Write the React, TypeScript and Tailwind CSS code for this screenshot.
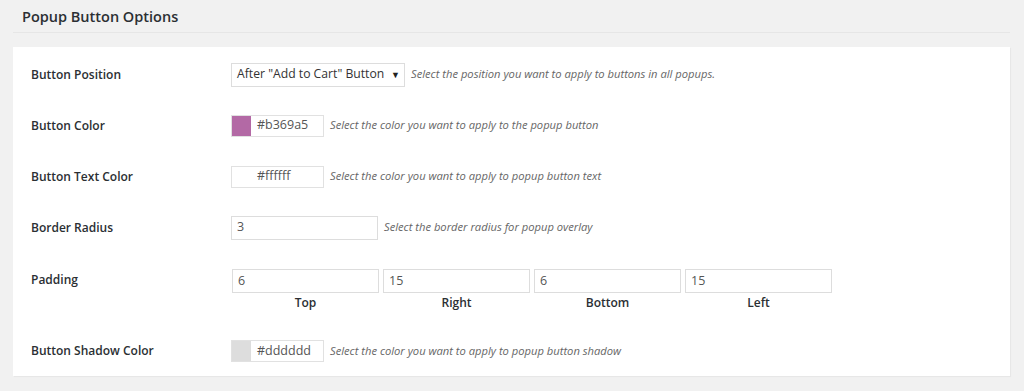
import React from "react";

const font = { fontFamily: "'Open Sans', 'Liberation Sans', sans-serif" };

function Label({ children }: { children: React.ReactNode }) {
  return <div className="w-[200px] shrink-0 text-[12px] font-semibold text-[#2b2f33]">{children}</div>;
}

function Desc({ children }: { children: React.ReactNode }) {
  return <span className="ml-[6px] text-[11.2px] italic text-[#666]">{children}</span>;
}

function ColorField({ color, value }: { color: string; value: string }) {
  return (
    <div className="flex h-[22px] w-[93px] border border-[#e1e1e1] bg-white">
      <div className="h-full w-[19px]" style={{ background: color }} />
      <div className="flex items-center pl-[6px] text-[12.5px] text-[#555]">{value}</div>
    </div>
  );
}

function TextField({ value, w = "w-[147px]" }: { value: string; w?: string }) {
  return (
    <div className={`flex h-[24px] ${w} items-center border border-[#dddddd] bg-white pl-[5px] text-[12.5px] text-[#555]`}>
      {value}
    </div>
  );
}

export default function App() {
  const sides = [
    { v: "6", l: "Top" },
    { v: "15", l: "Right" },
    { v: "6", l: "Bottom" },
    { v: "15", l: "Left" },
  ];

  return (
    <div className="h-[391px] w-[1024px] bg-[#f1f1f1] pl-[13px] pr-[14px]" style={font}>
      {/* Header */}
      <div className="flex h-[33px] items-center border-b border-[#e6e6e6] pl-[9px] pt-[1px] text-[14.5px] font-semibold text-[#2b2f33]">
        Popup Button Options
      </div>

      {/* Panel */}
      <div className="mt-[14px] bg-white pl-[18px] pt-[2px] shadow-[1px_1px_1px_rgba(0,0,0,0.04)]">
        <div className="flex h-[51px] items-center">
          <Label>Button Position</Label>
          <div className="flex h-[24px] w-[174px] items-center justify-between border border-[#dddddd] bg-white pl-[5px] pr-[4px] text-[12.2px] text-[#333]">
            <span>After "Add to Cart" Button</span>
            <span className="text-[9px] text-[#222]">▼</span>
          </div>
          <Desc>Select the position you want to apply to buttons in all popups.</Desc>
        </div>

        <div className="flex h-[51px] items-center">
          <Label>Button Color</Label>
          <ColorField color="#b369a5" value="#b369a5" />
          <Desc>Select the color you want to apply to the popup button</Desc>
        </div>

        <div className="flex h-[51px] items-center">
          <Label>Button Text Color</Label>
          <ColorField color="#ffffff" value="#ffffff" />
          <Desc>Select the color you want to apply to popup button text</Desc>
        </div>

        <div className="flex h-[51px] items-center">
          <Label>Border Radius</Label>
          <TextField value="3" />
          <Desc>Select the border radius for popup overlay</Desc>
        </div>

        <div className="flex h-[73px] items-start pt-[16px]">
          <div className="w-[201px] shrink-0 text-[12px] font-semibold leading-[22px] text-[#2b2f33]">Padding</div>
          <div className="flex gap-[4px]">
            {sides.map((s, i) => (
              <div key={i} className="flex w-[147px] flex-col items-center">
                <TextField value={s.v} />
                <div className="mt-[1px] text-[12px] font-semibold text-[#2b2f33]">{s.l}</div>
              </div>
            ))}
          </div>
        </div>

        <div className="flex h-[50px] items-center">
          <Label>Button Shadow Color</Label>
          <ColorField color="#dddddd" value="#dddddd" />
          <Desc>Select the color you want to apply to popup button shadow</Desc>
        </div>
      </div>
    </div>
  );
}
